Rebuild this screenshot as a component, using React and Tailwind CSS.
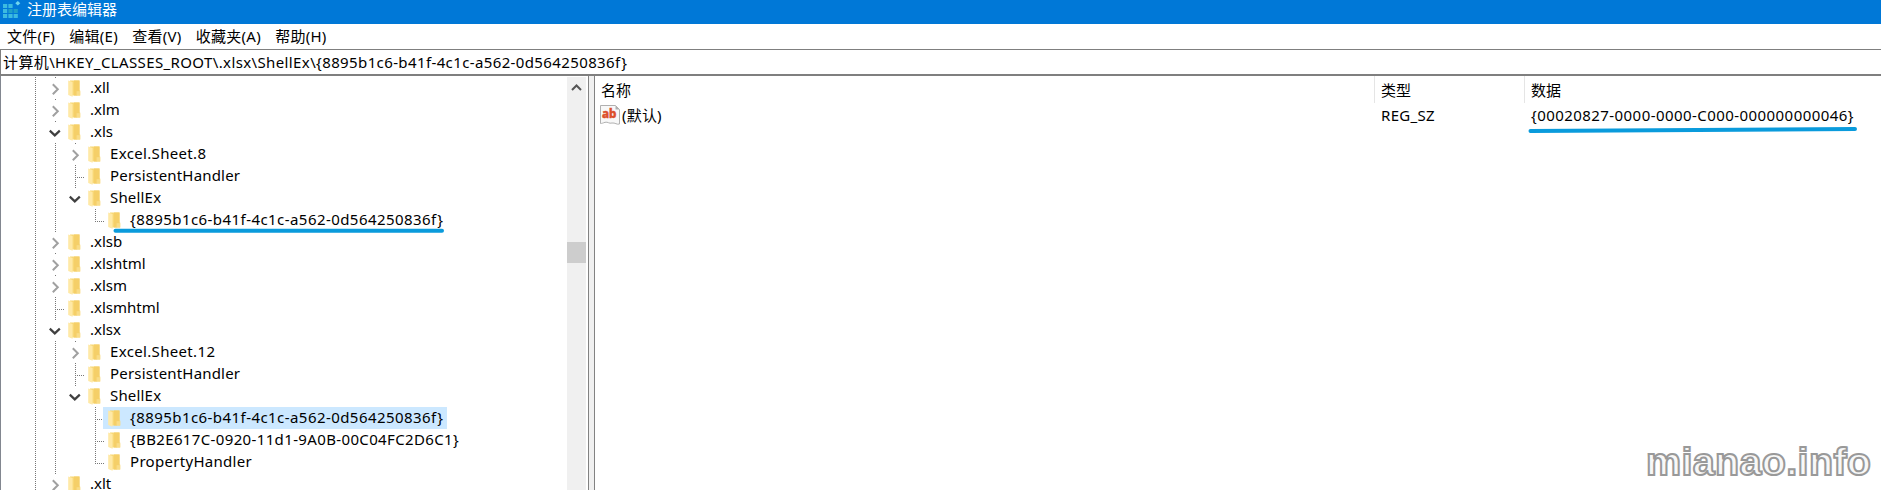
import React from "react";

const ROWS = [
  { g: [], kind: "closed", text: ".xll" },
  { g: [], kind: "closed", text: ".xlm" },
  { g: [], kind: "open", text: ".xls" },
  { g: ["line"], kind: "closed", text: "Excel.Sheet.8", track: "tracking-[0.34px]" },
  { g: ["line"], kind: "tee", text: "PersistentHandler", track: "tracking-[0.18px]" },
  { g: ["line"], kind: "open", text: "ShellEx", track: "tracking-[0.18px]" },
  { g: ["line", "blank"], kind: "end", text: "{8895b1c6-b41f-4c1c-a562-0d564250836f}", track: "tracking-[0.44px]" },
  { g: [], kind: "closed", text: ".xlsb" },
  { g: [], kind: "closed", text: ".xlshtml" },
  { g: [], kind: "closed", text: ".xlsm" },
  { g: [], kind: "tee", text: ".xlsmhtml" },
  { g: [], kind: "open", text: ".xlsx" },
  { g: ["line"], kind: "closed", text: "Excel.Sheet.12", track: "tracking-[0.34px]" },
  { g: ["line"], kind: "tee", text: "PersistentHandler", track: "tracking-[0.18px]" },
  { g: ["line"], kind: "open", text: "ShellEx", track: "tracking-[0.18px]" },
  { g: ["line", "blank"], kind: "tee", text: "{8895b1c6-b41f-4c1c-a562-0d564250836f}", track: "tracking-[0.44px]", selected: true },
  { g: ["line", "blank"], kind: "tee", text: "{BB2E617C-0920-11d1-9A0B-00C04FC2D6C1}", track: "tracking-[0.36px]" },
  { g: ["line", "blank"], kind: "end", text: "PropertyHandler", track: "tracking-[0.3px]" },
  { g: [], kind: "closed", text: ".xlt" },
];

function Guide({ kind }) {
  const dots = { stroke: "#777", strokeWidth: 1, strokeDasharray: "1 1", fill: "none" };
  return (
    <svg className="h-[22px] w-5 shrink-0" viewBox="0 0 20 22">
      {(kind === "line" || kind === "tee") && <path d="M10.5 0V22" {...dots} />}
      {kind === "end" && <path d="M10.5 0V13" {...dots} />}
      {(kind === "tee" || kind === "end") && <path d="M12 12.5H19" {...dots} />}
      {kind === "closed" && (
        <>
          <path d="M10.5 0V1" stroke="#777" />
          <path d="M7.8 7.3L12.8 12.3L7.8 17.3" fill="none" stroke="#a0a0a0" strokeWidth="2" />
        </>
      )}
      {kind === "open" && (
        <>
          <path d="M10.5 0V1" stroke="#777" />
          <path d="M4.8 9.6L9.8 14.4L14.8 9.6" fill="none" stroke="#404040" strokeWidth="2.2" />
        </>
      )}
    </svg>
  );
}

function Folder() {
  return (
    <svg className="h-[22px] w-[25px] shrink-0" viewBox="0 0 25 22">
      <path d="M5 3.5H14.5V13.5H15.2V18.5H5Z" fill="#f8d775" />
      <path d="M9 3.5H14.5V13.5L12 18.5H9Z" fill="#f5cf68" />
      <path d="M3.2 3.5L7.6 5V19.8L3.2 18Z" fill="#ffe9a6" />
      <path d="M11.6 18.5V14.2H15.2V18.5Z" fill="#f9dc87" />
    </svg>
  );
}

function TreeRow({ row }) {
  return (
    <div className="flex h-[22px] shrink-0 leading-[21px]">
      <Guide kind="line" />
      {row.g.map((k, i) => (
        <Guide key={i} kind={k} />
      ))}
      <Guide kind={row.kind} />
      <div className={row.selected ? "-ml-[2px] flex bg-[#cce8ff] pr-[4px] pl-[2px]" : "flex"}>
        <Folder />
        <span className={row.track}>{row.text}</span>
      </div>
    </div>
  );
}

function AppIcon() {
  return (
    <svg className="h-5 w-5 shrink-0" viewBox="0 0 20 20">
      <path d="M1 4H5.2V8H1ZM6.4 4H10.6V8H6.4ZM1 9H5.2V13H1ZM1 14H5.2V18H1ZM6.4 14H10.6V18H6.4ZM11.6 14H15.8V18H11.6Z" fill="#3cbbe0" />
      <path d="M11.6 9H15.8V13H11.6ZM6.4 9H10.6V13H6.4Z" fill="#1fa0c8" />
      <path d="M15.8 1L18.3 3.2L15.8 5.5L13.3 3.2Z" fill="#6fd6ee" />
    </svg>
  );
}

function StringIcon() {
  return (
    <svg className="h-5 w-5 shrink-0" viewBox="0 0 20 20">
      <path d="M.5 .5H15.5L19.5 4.5V19C17 20 15 17.5 12 18C9 19 8 16.5 5 17.3C3 18 2 18.5 .5 18.5Z" fill="#f8f8f8" stroke="#b0b0b0" />
      <path d="M15.5 .5V4.5H19.5Z" fill="#b0b0b0" />
      <text x="2" y="13" fontSize="13" fontWeight="800" fill="#dc4f2c" stroke="#dc4f2c" strokeWidth=".5" textLength="14.5" lengthAdjust="spacingAndGlyphs" fontFamily="Noto Sans">
        ab
      </text>
    </svg>
  );
}

export default function App() {
  return (
    <div className="relative flex h-[490px] w-[1881px] flex-col overflow-hidden bg-white font-['Noto_Sans','Noto_Sans_CJK_SC',sans-serif] text-[15px] leading-[22px] whitespace-nowrap text-black">
      <header className="flex h-6 shrink-0 bg-[#0078d7] pl-[2px] leading-[19px] text-white">
        <AppIcon />
        <span className="pl-[5px]">注册表编辑器</span>
      </header>
      <nav className="flex h-[25px] shrink-0 gap-[14.3px] pt-px pl-[7px] tracking-[0.25px]">
        <span>文件(F)</span>
        <span>编辑(E)</span>
        <span>查看(V)</span>
        <span>收藏夹(A)</span>
        <span>帮助(H)</span>
      </nav>
      <div className="flex h-[27px] shrink-0 border-t border-b-2 border-l border-[#7f7f7f] pt-px pl-[2px] tracking-[0.38px]">
        计算机\HKEY_CLASSES_ROOT\.xlsx\ShellEx\{"{"}8895b1c6-b41f-4c1c-a562-0d564250836f{"}"}
      </div>
      <main className="flex min-h-0 flex-1">
        <section className="flex w-[567px] shrink-0 flex-col overflow-hidden border-l border-[#828790] pt-px pl-6">
          {ROWS.map((row, i) => (
            <TreeRow key={i} row={row} />
          ))}
        </section>
        <div className="mt-px flex w-[19px] shrink-0 flex-col bg-[#f0f0f0]">
          <svg className="h-5 w-[19px]" viewBox="0 0 19 20">
            <path d="M5 13L9.5 8.5L14 13" fill="none" stroke="#555" strokeWidth="2" />
          </svg>
          <div className="mt-[145px] h-[21px] bg-[#cdcdcd]" />
        </div>
        <div className="ml-[2px] w-[7px] shrink-0 border-x border-[#828282] bg-[#f0f0f0]" />
        <section className="flex-1">
          <div className="flex h-[27px] leading-[28px]">
            <div className="w-[780px] border-r border-[#e5e5e5] pl-[6px]">名称</div>
            <div className="w-[150px] border-r border-[#e5e5e5] pl-[6px]">类型</div>
            <div className="pl-[6px]">数据</div>
          </div>
          <div className="flex h-[26px] leading-[25px]">
            <div className="flex w-[780px] pt-[2px] pl-[5px] leading-[21px]">
              <StringIcon />
              <span className="pl-[2px] tracking-[0.2px]">(默认)</span>
            </div>
            <div className="w-[150px] pl-[6px] tracking-[0.3px]">REG_SZ</div>
            <div className="pl-[6px] tracking-[0.44px]">{"{00020827-0000-0000-C000-000000000046}"}</div>
          </div>
        </section>
      </main>
      <svg className="pointer-events-none absolute inset-0 h-[490px] w-[1881px]" viewBox="0 0 1881 490">
        <path d="M115.5 230.8H442" stroke="#0a9bdc" strokeWidth="4" strokeLinecap="round" />
        <path d="M1530.5 131L1855 129" stroke="#0a9bdc" strokeWidth="4" strokeLinecap="round" />
        <text x="1646" y="475" fontFamily="Liberation Sans" fontWeight="700" fontSize="39.5" fill="#f8f8f8" stroke="#999" strokeWidth="2" textLength="225">
          mianao.info
        </text>
      </svg>
    </div>
  );
}
